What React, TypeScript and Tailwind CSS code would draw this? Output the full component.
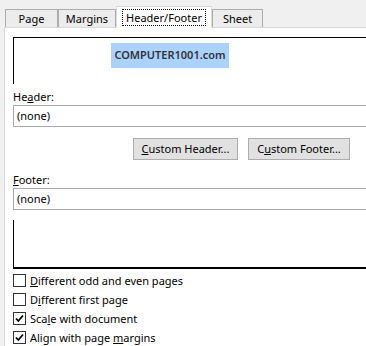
import React from 'react'

const font = { fontFamily: '"Noto Sans", "Open Sans", sans-serif' }

const Tab = ({ label, width, active }: { label: string; width: string; active?: boolean }) =>
  active ? (
    <div className={`relative z-10 -mb-px flex h-[22px] items-center justify-center border border-b-0 border-[#d9d9d9] bg-white ${width}`}>
      <span className="border border-dotted border-black px-[3px] leading-[15px]">{label}</span>
    </div>
  ) : (
    <div className={`flex h-[18px] items-center justify-center border border-b-0 border-[#adadad] bg-[#ececec] leading-[15px] ${width}`}>
      {label}
    </div>
  )

const Checkbox = ({ checked, children }: { checked?: boolean; children: React.ReactNode }) => (
  <div className="flex h-[19px] items-center">
    <div className="flex h-[13px] w-[13px] items-center justify-center border border-[#333] bg-white">
      {checked && (
        <svg width="9" height="9" viewBox="0 0 9 9">
          <path d="M1 4.5 L3.3 7 L8 1.5" fill="none" stroke="#000" strokeWidth="1.8" />
        </svg>
      )}
    </div>
    <span className="ml-[4px] leading-[15px]">{children}</span>
  </div>
)

export default function App() {
  return (
    <div className="relative h-[346px] w-[366px] overflow-hidden bg-[#f0f0f0] text-[11px] text-black" style={font}>
      <div className="flex h-[27px] items-end pl-[5px]">
        <Tab label="Page" width="w-[53px]" />
        <Tab label="Margins" width="w-[58px]" />
        <Tab label="Header/Footer" width="w-[96px]" active />
        <Tab label="Sheet" width="w-[51px]" />
      </div>
      <div className="ml-[4px] mr-[-80px] border-l border-t border-[#d9d9d9] bg-white pl-[8px] pt-[9px]">
        <div className="h-[47px] border-l border-t border-black pl-[97px] pt-[5px]">
          <div className="flex h-[25px] w-[118px] items-center justify-center bg-[#aad2ff] text-[11px] font-semibold text-[#333]">
            COMPUTER1001.com
          </div>
        </div>
        <div className="mt-[5px] leading-[15px]">
          He<span className="underline">a</span>der:
        </div>
        <div className="mt-[1px] flex h-[22px] items-center border-y border-l border-[#ababab] pl-[3px]">(none)</div>
        <div className="mt-[11px] flex gap-[10px] pl-[120px]">
          <div className="flex h-[22px] w-[105px] items-center justify-center border border-[#adadad] bg-[#e1e1e1]">
            <span><span className="underline">C</span>ustom Header...</span>
          </div>
          <div className="flex h-[22px] w-[102px] items-center justify-center border border-[#adadad] bg-[#e1e1e1]">
            <span>C<span className="underline">u</span>stom Footer...</span>
          </div>
        </div>
        <div className="mt-[12px] leading-[15px]">
          <span className="underline">F</span>ooter:
        </div>
        <div className="mt-[1px] flex h-[22px] items-center border-y border-l border-[#ababab] pl-[3px]">(none)</div>
        <div className="mt-[10px] h-[49px] border-b-2 border-l border-black" />
        <div className="mt-[2px] pb-[10px]">
          <Checkbox>
            <span className="underline">D</span>ifferent odd and even pages
          </Checkbox>
          <Checkbox>
            D<span className="underline">i</span>fferent first page
          </Checkbox>
          <Checkbox checked>
            Sca<span className="underline">l</span>e with document
          </Checkbox>
          <Checkbox checked>
            Align with page <span className="underline">m</span>argins
          </Checkbox>
        </div>
      </div>
    </div>
  )
}
